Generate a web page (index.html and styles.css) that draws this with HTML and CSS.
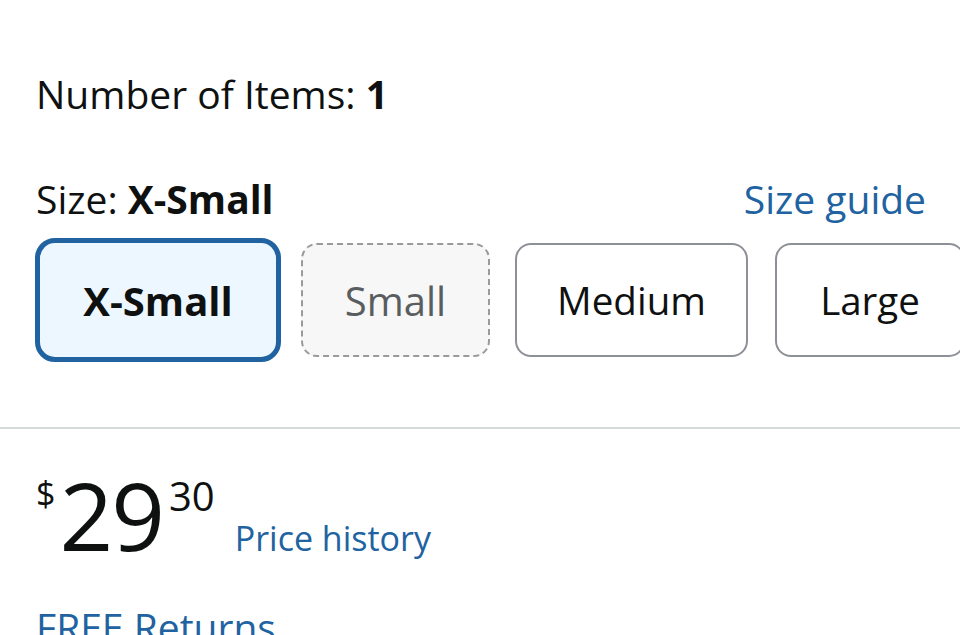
FILE: index.html
```html
<!DOCTYPE html>
<html>
<head>
<meta charset="utf-8">
<link rel="stylesheet" href="styles.css">
</head>
<body>
<div class="page">
  <div class="section">
    <div class="items">Number of Items: <b>1</b></div>
    <div class="size-row">
      <div class="size-label">Size: <b>X-Small</b></div>
      <a class="link guide">Size guide</a>
    </div>
    <div class="swatches">
      <div class="swatch selected">X-Small</div>
      <div class="swatch unavailable">Small</div>
      <div class="swatch medium">Medium</div>
      <div class="swatch large">Large</div>
    </div>
  </div>
  <hr class="divider">
  <div class="section">
    <div class="price-row">
      <span class="price"><span class="sym">$</span>29<span class="frac">30</span></span>
      <a class="link history">Price history</a>
    </div>
    <div class="link returns">FREE Returns</div>
  </div>
</div>
</body>
</html>
```
FILE: styles.css
```css
html, body {
  margin: 0;
  padding: 0;
  background: #ffffff;
}
body {
  font-family: "Open Sans", "Noto Sans", sans-serif;
  color: #0f1111;
  overflow: hidden;
  width: 960px;
  height: 635px;
}
.page {
  padding-top: 72px;
}
.section {
  padding: 0 0 0 36px;
}
.items {
  font-size: 39px;
  line-height: 44px;
}
.items b, .size-label b {
  font-weight: 700;
}
.size-row {
  margin-top: 61px;
  display: flex;
  justify-content: space-between;
  align-items: baseline;
  padding-right: 34px;
}
.size-label {
  font-size: 39px;
  line-height: 44px;
}
.link {
  color: #2162a1;
  text-decoration: none;
}
.guide {
  font-size: 39px;
  line-height: 44px;
}
.swatches {
  margin-top: 17px;
  display: flex;
  align-items: center;
  height: 124px;
  white-space: nowrap;
}
.swatch {
  box-sizing: border-box;
  height: 114px;
  border: 2px solid #8d9096;
  border-radius: 16px;
  font-size: 38.5px;
  display: flex;
  align-items: center;
  justify-content: center;
  flex-shrink: 0;
}
.swatch.selected {
  height: 124px;
  width: 246px;
  margin-left: -1px;
  border: 5px solid #2162a1;
  border-radius: 20px;
  background: #edf7ff;
  font-weight: 700;
  font-size: 40px;
}
.swatch.unavailable {
  width: 189px;
  margin-left: 20px;
  border: 2px dashed #9a9a9a;
  background: #f7f7f7;
  color: #5a5d5f;
  font-size: 40px;
}
.swatch.medium {
  width: 233px;
  margin-left: 25px;
}
.swatch.large {
  width: 190px;
  margin-left: 27px;
}
.divider {
  margin: 65px 0 0 0;
  border: 0;
  height: 2px;
  background: #d5d9d9;
}
.price-row {
  margin-top: 39px;
  display: flex;
  align-items: baseline;
}
.price {
  font-size: 94px;
  line-height: 94px;
  letter-spacing: -2px;
}
.sym {
  font-size: 34px;
  line-height: 50px;
  vertical-align: top;
  letter-spacing: 0;
  margin-right: 4px;
}
.frac {
  font-size: 40px;
  line-height: 56px;
  vertical-align: top;
  letter-spacing: 0;
  margin-left: 6px;
}
.history {
  font-size: 34px;
  line-height: 44px;
  margin-left: 20px;
}
.returns {
  margin-top: 43px;
  font-size: 39px;
  line-height: 44px;
}
```
